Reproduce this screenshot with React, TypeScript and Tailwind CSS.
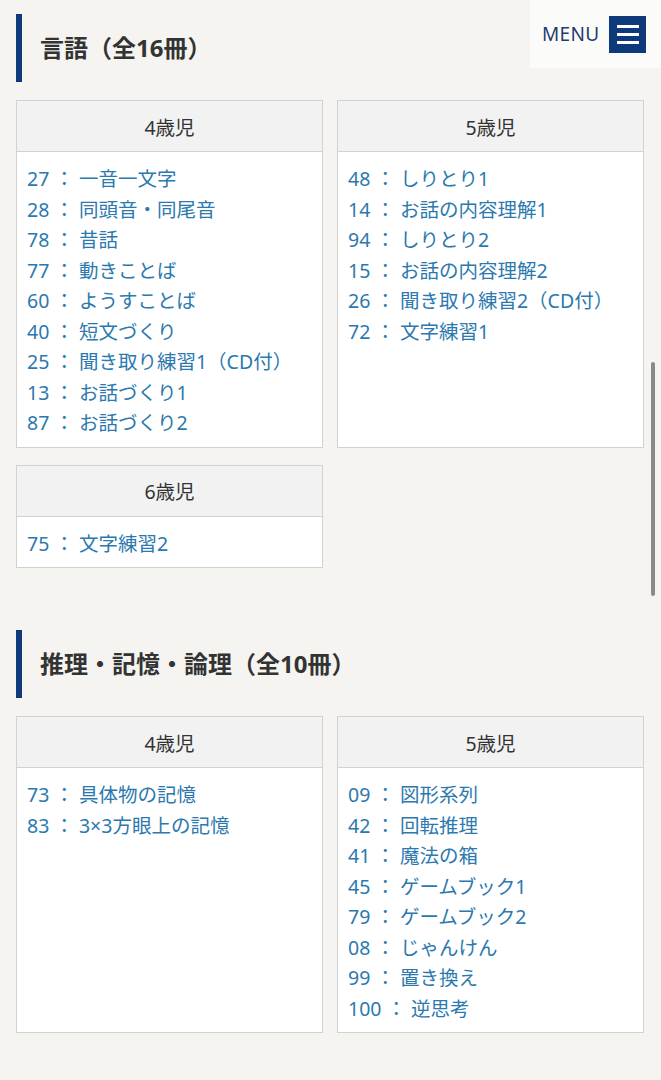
import React from 'react';

type Group = { age: string; items: [string, string][] };
type Section = { title: string; groups: Group[] };

const SECTIONS: Section[] = [
  {
    title: '言語（全16冊）',
    groups: [
      {
        age: '4歳児',
        items: [
          ['27', '一音一文字'],
          ['28', '同頭音・同尾音'],
          ['78', '昔話'],
          ['77', '動きことば'],
          ['60', 'ようすことば'],
          ['40', '短文づくり'],
          ['25', '聞き取り練習1（CD付）'],
          ['13', 'お話づくり1'],
          ['87', 'お話づくり2'],
        ],
      },
      {
        age: '5歳児',
        items: [
          ['48', 'しりとり1'],
          ['14', 'お話の内容理解1'],
          ['94', 'しりとり2'],
          ['15', 'お話の内容理解2'],
          ['26', '聞き取り練習2（CD付）'],
          ['72', '文字練習1'],
        ],
      },
      { age: '6歳児', items: [['75', '文字練習2']] },
    ],
  },
  {
    title: '推理・記憶・論理（全10冊）',
    groups: [
      {
        age: '4歳児',
        items: [
          ['73', '具体物の記憶'],
          ['83', '3×3方眼上の記憶'],
        ],
      },
      {
        age: '5歳児',
        items: [
          ['09', '図形系列'],
          ['42', '回転推理'],
          ['41', '魔法の箱'],
          ['45', 'ゲームブック1'],
          ['79', 'ゲームブック2'],
          ['08', 'じゃんけん'],
          ['99', '置き換え'],
          ['100', '逆思考'],
        ],
      },
    ],
  },
];

function AgeCard({ group }: { group: Group }) {
  return (
    <div className="flex flex-col border border-[#d2d2d2] bg-white">
      <div className="h-[51px] flex items-center justify-center pt-[3px] bg-[#f2f2f2] border-b border-[#d2d2d2] text-[19.5px] text-[#333]">
        {group.age}
      </div>
      <ul className="pt-[12px] pb-[8px] px-[10px]">
        {group.items.map(([num, name]) => (
          <li key={num} className="text-[19.5px] leading-[30.5px] text-[#2b79ae] whitespace-nowrap">
            {num} ： {name}
          </li>
        ))}
      </ul>
    </div>
  );
}

export default function App() {
  return (
    <div
      className="relative min-h-[1080px] bg-[#f5f4f0] pt-[14px] pb-[40px]"
      style={{ fontFamily: '"Noto Sans", "Noto Sans CJK JP", sans-serif' }}
    >
      {/* menu */}
      <div className="absolute top-0 right-0 w-[131px] h-[68px] bg-[#fbfbf9] flex items-center pl-[12px] gap-[10px]">
        <span className="text-[19px] text-[#1e3d6e] tracking-[0.3px]">MENU</span>
        <span className="w-[37px] h-[37px] bg-[#0e3a7c] flex flex-col items-center justify-center gap-[5px]">
          <span className="block w-[22px] h-[3px] bg-white" />
          <span className="block w-[22px] h-[3px] bg-white" />
          <span className="block w-[22px] h-[3px] bg-white" />
        </span>
      </div>

      {/* scrollbar overlay */}
      <div className="absolute left-[651px] top-[362px] w-[4px] h-[234px] rounded-full bg-[#8a8a88]" />

      {SECTIONS.map((s, i) => (
        <section key={s.title} className={i > 0 ? 'mt-[62px]' : ''}>
          <h2 className="ml-[16px] h-[68px] flex items-center border-l-[6px] border-[#0e3a7c] pl-[18px] text-[24px] font-bold text-[#333]">
            {s.title}
          </h2>
          <div className="mt-[18px] px-[16px] grid grid-cols-2 gap-x-[14px] gap-y-[17px] pr-[17px]">
            {s.groups.map(g => (
              <AgeCard key={g.age} group={g} />
            ))}
          </div>
        </section>
      ))}
    </div>
  );
}
